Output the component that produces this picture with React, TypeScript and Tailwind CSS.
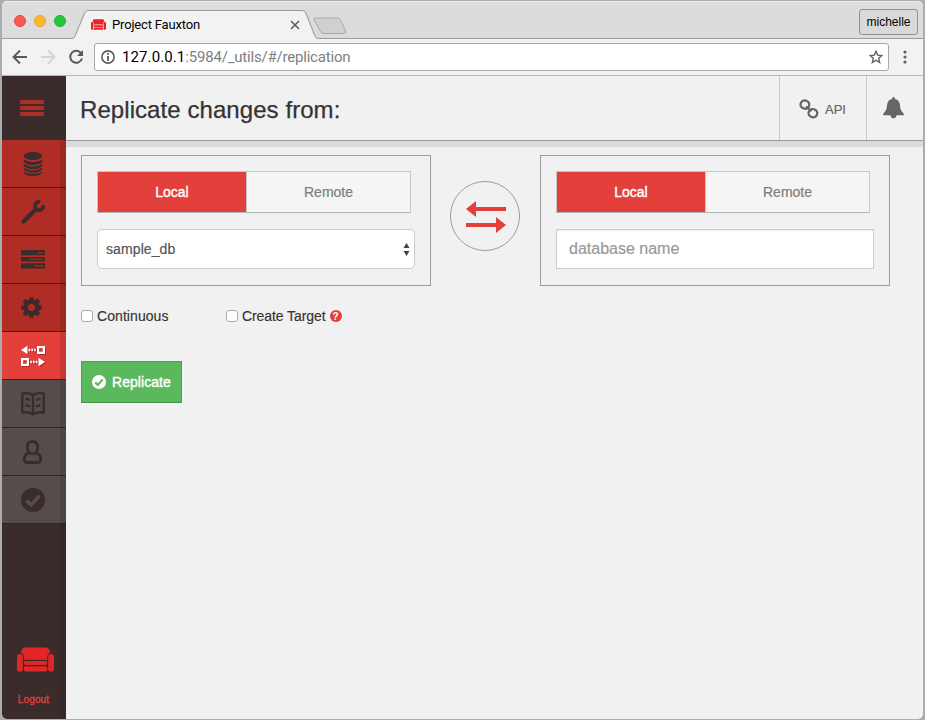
import React from "react";

function Couch({ className }: { className: string }) {
  return (
    <svg className={className} viewBox="0 0 37 25" preserveAspectRatio="none" fill="currentColor">
      <path d="M4 5.500Q4 .5 9 .5H28Q33 .5 33 5.500Q30.500 6.500 30.300 9V13Q29 12.700 27 12.700H10Q8 12.700 6.700 13V9Q6.500 6.500 4 5.500Z" />
      <rect x="0" y="7" width="5.800" height="17.500" rx="2.600" />
      <rect x="31.200" y="7" width="5.800" height="17.500" rx="2.600" />
      <rect x="6.800" y="14" width="23.400" height="4" rx="2" />
      <rect x="6.800" y="19.200" width="23.400" height="5.300" rx="2" />
    </svg>
  );
}

function Database() {
  return (
    <svg className="h-6 w-6" viewBox="0 0 24 24" fill="currentColor">
      <ellipse cx="12" cy="4" rx="9.200" ry="4" />
      <path d="M2.800 7Q6 10 12 10T21.200 7V9.200Q19 13 12 13T2.800 9.200Z" />
      <path d="M2.800 11.500Q6 14.500 12 14.500T21.200 11.500V13.400Q19 17 12 17T2.800 13.400Z" />
      <path d="M2.800 15.500Q6 18.400 12 18.400T21.200 15.500V17.400Q19 20.500 12 20.500T2.800 17.400Z" />
      <path d="M2.800 19.200Q6 21.800 12 21.800T21.200 19.200V20.500Q19 24 12 24T2.800 20.500Z" />
    </svg>
  );
}

function Wrench() {
  return (
    <svg className="h-6 w-6" viewBox="0 0 24 24" fill="none" stroke="currentColor">
      <path d="M2.600 21.600L14.500 9.700" strokeWidth="4.200" strokeLinecap="round" />
      <path d="M19.200 2.100A4.100 4.100 0 1 0 22.100 5.200" strokeWidth="3.700" />
    </svg>
  );
}

function Tasks() {
  return (
    <svg className="h-6 w-6" viewBox="0 0 24 24">
      <g fill="currentColor">
        <rect y="2" width="24" height="5.200" rx=".7" />
        <rect y="9" width="24" height="4.500" rx=".7" />
        <rect y="15.300" width="24" height="5.200" rx=".7" />
      </g>
      <g fill="#982a23">
        <rect x="17" y="4" width="5.300" height="1.500" />
        <rect x="8.500" y="10.300" width="13.800" height="1.500" />
        <rect x="13.500" y="17" width="8.800" height="1.700" />
      </g>
    </svg>
  );
}

function Gear() {
  return (
    <svg className="mr-[3px] h-[21px] w-[21px]" viewBox="-10.500 -10.500 21 21" fill="currentColor">
      <circle r="5.700" fill="none" stroke="currentColor" strokeWidth="4.600" />
      {[0, 45, 90, 135, 180, 225, 270, 315].map((a) => (
        <path key={a} d="M-2.600 -7L-1.900 -10.300H1.900L2.600 -7Z" transform={`rotate(${a})`} />
      ))}
    </svg>
  );
}

function ReplicationShape() {
  return (
    <>
      <path d="M0 6L6.500 1.800V10.200Z" />
      <path d="M7.500 4.700h1.700v2.600H7.500zM10.300 4.700h1.700v2.600h-1.700zM13.100 4.700h1.600v2.600h-1.600z" />
      <path fillRule="evenodd" d="M16 2h8v8h-8zM18.200 4.200v3.600h3.600V4.200z" />
      <path fillRule="evenodd" d="M0 14h8v8H0zM2.200 16.200v3.600h3.600v-3.600z" />
      <path d="M9.200 16.700h1.600v2.600H9.200zM11.900 16.700h1.700v2.600h-1.700zM14.700 16.700h1.700v2.600h-1.700z" />
      <path d="M24 18L17.500 13.800V22.200Z" />
    </>
  );
}

function Replication() {
  return (
    <svg className="h-6 w-6 overflow-visible" viewBox="0 0 24 24">
      <g fill="#a52b26" transform="translate(1 1)"><ReplicationShape /></g>
      <g fill="#fff"><ReplicationShape /></g>
    </svg>
  );
}

function Book() {
  return (
    <svg className="h-6 w-6" viewBox="0 0 24 24" fill="none" stroke="currentColor">
      <path strokeWidth="2.400" strokeLinejoin="round" d="M1.300 1.600Q8 .2 12 3Q16 .2 22.700 1.600V20.500Q16 19.500 12 22.500Q8 19.500 1.300 20.500ZM12 3V22" />
      <path strokeWidth="2.500" d="M4.500 6.800L9 7.900M4.500 13.300L9 14.400M19.500 6.800L15 7.900M19.500 13.300L15 14.400" />
    </svg>
  );
}

function Person() {
  return (
    <svg className="mr-[3px] h-6 w-6" viewBox="0 0 24 24" fill="none" stroke="currentColor" strokeWidth="2.800">
      <path d="M12.500 1.500C8.800 1.500 7.200 4 7.200 7C7.200 9.300 8.100 11.400 9.300 12.600C6 13.700 4.300 16 4.300 19.300Q4.300 22.500 7.300 22.500H17.700Q20.700 22.500 20.700 19.300C20.700 16 19 13.700 15.700 12.600C16.900 11.400 17.800 9.300 17.800 7C17.800 4 16.200 1.500 12.500 1.500Z" />
      <path strokeWidth="2" d="M8.500 12.800Q12.500 15 16.500 12.800" />
    </svg>
  );
}

function CheckCircle({ className, mark }: { className: string; mark: string }) {
  return (
    <svg className={className} viewBox="0 0 24 24">
      <circle cx="12" cy="12" r="12" fill="currentColor" />
      <path d="M5.500 12.500L10 17L18.500 7.500" fill="none" stroke={mark} strokeWidth="3.600" />
    </svg>
  );
}

function NavItem({ tone, children }: { tone: "red" | "active" | "gray"; children: React.ReactNode }) {
  const tones = {
    red: "bg-[#af2d24] border-r-[#9b2922] text-[#3a2c2b]",
    active: "bg-[#e33f3b] border-r-[#c93835] text-white",
    gray: "bg-[#554d4c] border-r-[#4d4445] text-[#3a2c2b]",
  };
  return (
    <div className="h-12 border-b border-[#3a2020]">
      <div className={`flex h-full items-center justify-center border-r-[6px] pl-[4px] ${tones[tone]}`}>{children}</div>
    </div>
  );
}

function Toggle() {
  return (
    <div className="flex h-[42px] w-[314px] border border-[#c8c8c8] border-b-[#b3b3b3] bg-[#f5f5f5] text-[14px]">
      <button className="w-[149px] border-r border-[#c8c8c8] bg-[#e33f3b] text-white [-webkit-text-stroke:0.4px_white]">Local</button>
      <button className="flex-1 text-[#7d7d7d] [-webkit-text-stroke:0.2px_#7d7d7d]">Remote</button>
    </div>
  );
}

function Chrome() {
  return (
    <>
      <div className="relative flex h-[38px] items-center rounded-t-[5px] border-t border-[#eee] bg-[#dcdcdc]">
        <div className="flex gap-2 pl-3">
          <i className="h-3 w-3 rounded-full border border-[#e2443f] bg-[#fc5753]" />
          <i className="h-3 w-3 rounded-full border border-[#e9a22b] bg-[#fdb62d]" />
          <i className="h-3 w-3 rounded-full border border-[#1fae30] bg-[#26c73a]" />
        </div>
        <div className="ml-2 flex h-full w-[246px] items-center bg-transparent">
          <svg className="absolute bottom-[-1px] left-0 h-[30px] w-full" fill="none">
            <path d="M0 28.500H69Q72 28.500 73 26L82.500 3Q84 .5 87 .5H300Q303 .5 304 3L313 26Q314 28.500 317 28.500H921" fill="none" stroke="#9a9a9a" />
            <path d="M70 30Q73 29 74 26L83.500 3.500Q84.500 1 87 1H300Q302 1 303 3.500L312 26Q313 29 316 30Z" fill="#f2f2f2" />
            <path d="M313.500 8H335Q337.500 8 338.500 10L343.500 21Q344 23.500 342 23.500H322Q319.500 23.500 318.500 21.500L312 10Q311 8 313.500 8Z" fill="#d0d0d0" stroke="#a8a8a8" />
          </svg>
          <div className="relative flex w-full items-center pl-[17px] pt-[8px]">
            <Couch className="h-[11px] w-[15px] text-[#e42528]" />
            <span className="ml-[6px] whitespace-nowrap pt-px font-['Roboto'] text-[13px] leading-4 tracking-[-0.17px] text-black">Project Fauxton</span>
            <svg className="absolute right-[20px] top-[12px] h-[10px] w-[10px]" viewBox="0 0 10 10"><path d="M1 1L9 9M9 1L1 9" stroke="#5a5a5a" strokeWidth="1.500" /></svg>
          </div>
        </div>
        <div className="ml-auto mr-[5px] mt-[2px] h-[26px] w-[59px] rounded-[3px] border border-[#929292] bg-[#d9d9d9] pt-[4px] text-center text-[12px] leading-4 text-black">michelle</div>
      </div>
      <div className="flex h-[37px] items-center border-b border-[#b5b5b5] bg-[#f2f2f2] pl-[10px]">
        <svg className="h-4 w-4" viewBox="0 0 16 16" fill="none" stroke="#595959" strokeWidth="1.900"><path d="M15 8H2M8 1.500L1.500 8L8 14.500" /></svg>
        <svg className="ml-3 h-4 w-4" viewBox="0 0 16 16" fill="none" stroke="#d4d4d4" strokeWidth="1.900"><path d="M1 8H14M8 1.500L14.500 8L8 14.500" /></svg>
        <svg className="ml-[12px] h-4 w-4" viewBox="0 0 16 16"><path d="M13.300 4.500A6 6 0 1 0 14 9.500" fill="none" stroke="#595959" strokeWidth="2" /><path d="M15 1V7H9Z" fill="#595959" /></svg>
        <div className="ml-[10px] flex h-[28px] w-[795px] items-center rounded-[3px] border border-[#a8a8a8] bg-white pl-[6px]">
          <svg className="h-[14px] w-[14px]" viewBox="0 0 14 14"><circle cx="7" cy="7" r="6.100" fill="none" stroke="#5a5a5a" strokeWidth="1.600" /><path d="M6.100 3h1.800v1.800H6.100zM6.100 6h1.800v5H6.100z" fill="#5a5a5a" /></svg>
          <span className="ml-[7px] whitespace-nowrap font-['Roboto'] text-[15px] leading-5 tracking-[-0.2px] text-[#808080]"><span className="tracking-[0.1px] text-black">127.0.0.1</span>:5984/_utils/#/replication</span>
          <svg className="ml-auto mr-[5px] h-[14px] w-[14px]" viewBox="0 0 14 14"><path d="M7 1.300L8.700 5.100L12.900 5.500L9.700 8.300L10.700 12.500L7 10.200L3.300 12.500L4.300 8.300L1.100 5.500L5.300 5.100Z" fill="none" stroke="#606060" strokeWidth="1.400" /></svg>
        </div>
        <svg className="ml-[14px] h-[14px] w-[4px]" viewBox="0 0 4 14" fill="#606060"><circle cx="2" cy="2" r="1.600" /><circle cx="2" cy="7" r="1.600" /><circle cx="2" cy="12" r="1.600" /></svg>
      </div>
    </>
  );
}

export default function App() {
  return (
    <div className="h-[720px] w-[925px] overflow-hidden bg-[#aaadab] pb-[1px] pl-[2px] pr-[2px] pt-[1px] font-['Liberation_Sans',Arial,sans-serif]">
      <div className="flex h-[718px] flex-col overflow-hidden rounded-[5px] bg-[#f1f1f1]">
        <Chrome />
        <div className="flex min-h-0 flex-1">
          <nav className="flex w-16 flex-col bg-[#3a2c2b]">
            <div className="flex h-16 flex-col items-start justify-center gap-[2px] pl-[18px]">
              <i className="h-1 w-6 bg-[#af2d24]" /><i className="h-1 w-6 bg-[#af2d24]" /><i className="h-1 w-6 bg-[#af2d24]" />
            </div>
            <NavItem tone="red"><Database /></NavItem>
            <NavItem tone="red"><Wrench /></NavItem>
            <NavItem tone="red"><Tasks /></NavItem>
            <NavItem tone="red"><Gear /></NavItem>
            <NavItem tone="active"><Replication /></NavItem>
            <NavItem tone="gray"><Book /></NavItem>
            <NavItem tone="gray"><Person /></NavItem>
            <NavItem tone="gray"><CheckCircle className="h-6 w-6" mark="#554d4c" /></NavItem>
            <div className="flex flex-1 flex-col items-center justify-end border-r-[6px] border-[#352827] pb-[12px] pl-[5px] text-[#e42528]">
              <Couch className="ml-[4px] h-[25px] w-[37px]" />
              <span className="mt-[21px] text-[10px] leading-[14px] tracking-[0.15px] text-[#e33f3b] [-webkit-text-stroke:0.3px_#e33f3b]">Logout</span>
            </div>
          </nav>
          <main className="flex flex-1 flex-col">
            <header className="flex h-[65px] border-b border-[#999]">
              <h1 className="flex-1 whitespace-nowrap pl-[14px] pt-[18px] text-[24px] leading-8 tracking-[0.07px] text-[#333] [-webkit-text-stroke:0.25px_#333]">Replicate changes from:</h1>
              <div className="flex w-[87px] items-center border-l border-[#c8c8c8] pl-[19px] pt-[2px] text-[#666]">
                <svg className="h-[20px] w-[20px]" viewBox="0 0 20 20" fill="none" stroke="#666" strokeWidth="2.300"><rect x="1.600" y="1.600" width="8.600" height="8" rx="3.800" transform="rotate(20 5.900 5.600)" /><rect x="9.600" y="10.200" width="8.600" height="8" rx="3.800" transform="rotate(20 13.900 14.200)" /><path d="M7 7.500L12.500 12.300" strokeWidth="1.900" /></svg>
                <span className="ml-[6px] pt-px text-[13px] [-webkit-text-stroke:0.2px_#666]">API</span>
              </div>
              <div className="flex w-[57px] justify-center border-l border-[#c8c8c8] pr-[3px] pt-[21px]">
                <svg className="h-[22px] w-[21px]" viewBox="0 0 21 23" preserveAspectRatio="none" fill="#666"><path d="M10.500 0Q12 0 12 2Q16.800 3 17 9Q17.200 14.500 20.800 17.500V19H.2V17.500Q3.800 14.500 4 9Q4.200 3 9 2Q9 0 10.500 0ZM7.500 19H13.500Q13 22.300 10.500 22.300T7.500 19Z" /></svg>
              </div>
            </header>
            <div className="h-[6px] bg-[#dbdbdb]" />
            <div className="mt-[8px] flex pl-[15px]">
              <section className="flex h-[131px] w-[350px] flex-col gap-4 border border-[#a19a9b] p-[15px]">
                <Toggle />
                <div className="flex h-[40px] w-[318px] items-center rounded-[5px] border border-[#ccc] bg-white pl-[8px] pr-[4px] text-[14px] text-[#555]">
                  <span className="tracking-[0.1px] [-webkit-text-stroke:0.2px_#555]">sample_db</span>
                  <svg className="ml-auto h-[13px] w-[7px]" viewBox="0 0 7 13" fill="#444"><path d="M3.500 0L6.500 5H.5ZM3.500 13L.5 8H6.500Z" /></svg>
                </div>
              </section>
              <div className="ml-[19px] mt-[26px] flex h-[70px] w-[70px] items-center justify-center rounded-full border border-[#a19a9b]">
                <svg className="ml-px mt-[2px] h-[32px] w-[40px]" viewBox="0 0 40 32" fill="#e33f3b"><path d="M0 8L10 0V6H40V10H10V16ZM40 24L30 16V22H0V26H30V32Z" /></svg>
              </div>
              <section className="ml-[20px] flex h-[131px] w-[350px] flex-col gap-4 border border-[#a19a9b] p-[15px]">
                <Toggle />
                <input className="h-[40px] w-[318px] border border-[#ccc] bg-white px-3 text-[16px] shadow-[inset_0_1px_1px_rgba(0,0,0,0.075)] placeholder:text-[#999] [-webkit-text-stroke:0.2px_#999]" placeholder="database name" />
              </section>
            </div>
            <div className="mt-[20px] flex h-5 pl-[15px] text-[14px] text-[#333] [-webkit-text-stroke:0.15px_#333]">
              <label className="flex w-[145px] items-center"><i className="mr-[4px] h-3 w-3 rounded-[3px] border border-[#aaa] bg-white" /><span className="tracking-[0.07px]">Continuous</span></label>
              <label className="flex items-center"><i className="mr-[4px] h-3 w-3 rounded-[3px] border border-[#aaa] bg-white" /><span className="tracking-[-0.08px]">Create Target</span>
                <span className="ml-[4px] flex h-3 w-3 items-center justify-center rounded-full bg-[#e33f3b] text-[10px] font-bold text-white [-webkit-text-stroke:0]">?</span>
              </label>
            </div>
            <button className="ml-[15px] mt-[35px] flex h-[42px] w-[101px] items-center border border-[#4ba34b] border-b-[#419641] bg-[#5cb85c] pl-[10px] text-[14px] text-white">
              <CheckCircle className="h-[14px] w-[14px]" mark="#5cb85c" />
              <span className="ml-[6px] tracking-[0.05px] [-webkit-text-stroke:0.4px_white]">Replicate</span>
            </button>
          </main>
        </div>
      </div>
    </div>
  );
}
